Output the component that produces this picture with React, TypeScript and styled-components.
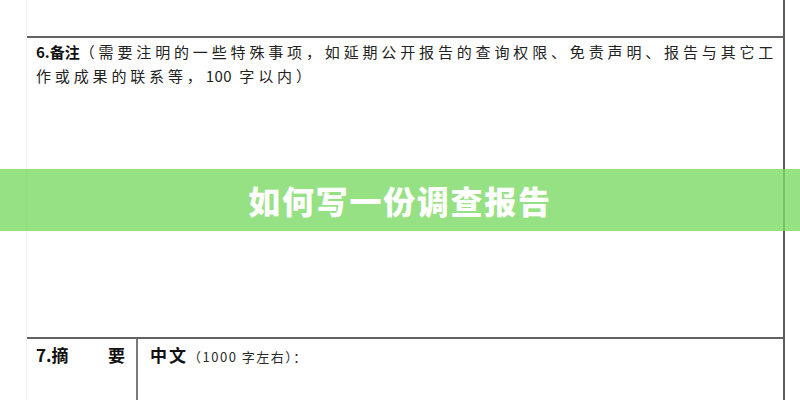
import React from "react";
import styled, { createGlobalStyle } from "styled-components";

const Global = createGlobalStyle`
  html, body { margin: 0; padding: 0; background: #ffffff; }
  body { width: 800px; height: 400px; overflow: hidden; }
  #root { width: 800px; height: 400px; }
`;

const Frame = styled.div`
  position: relative;
  width: 800px;
  height: 400px;
  background: #ffffff;
  overflow: hidden;
  font-family: "Noto Sans CJK SC", "Noto Sans", sans-serif;
  color: #1e1e1e;
`;

const Sheet = styled.div`
  display: flex;
  flex-direction: column;
  margin-left: 26px;
  width: 756px;
  height: 400px;
  border-left: 1px solid #f0f0f0;
  border-right: 2px solid #5c5c5c;
`;

const EmptyCell = styled.div`
  height: 36px;
  border-bottom: 2px solid #626262;
`;

const NoteCell = styled.div`
  height: 297px;
  padding: 2px 0 0 9px;
  font-size: 15px;
  line-height: 23.5px;
  letter-spacing: 3.85px;
  color: #222;
`;

const Strong = styled.span<{ $size?: number; $spacing?: number }>`
  font-weight: 700;
  color: #111;
  font-size: ${(p) => (p.$size ? `${p.$size}px` : "inherit")};
  letter-spacing: ${(p) => (p.$spacing !== undefined ? `${p.$spacing}px` : "inherit")};
`;

const Num = styled.span`
  letter-spacing: 0.5px;
`;

const BottomRow = styled.div`
  flex: 1;
  display: grid;
  grid-template-columns: 109px 1fr;
  border-top: 2px solid #626262;
`;

const LabelCell = styled.div`
  display: flex;
  justify-content: space-between;
  align-items: flex-start;
  padding: 4px 11px 0 9px;
  font-size: 17px;
  line-height: 24px;
  font-weight: 700;
  color: #111;
`;

const ContentCell = styled.div`
  border-left: 2px solid #7a7a7a;
  padding: 4px 0 0 12px;
  line-height: 24px;
  font-size: 13px;
  letter-spacing: 1.5px;
  color: #2a2a2a;
`;

const Banner = styled.div`
  position: absolute;
  left: 0;
  top: 169px;
  width: 800px;
  height: 62px;
  display: flex;
  align-items: center;
  justify-content: center;
  background: rgba(124, 217, 100, 0.8);
`;

const Title = styled.h1`
  margin: 0;
  font-family: "Noto Sans CJK SC", sans-serif;
  font-size: 32px;
  font-weight: 900;
  letter-spacing: 1.7px;
  color: #ffffff;
  line-height: 1;
`;

export default function App() {
  return (
    <Frame>
      <Global />
      <Sheet>
        <EmptyCell />
        <NoteCell>
          <Strong $spacing={0}>6.备注</Strong>（需要注明的一些特殊事项，如延期公开报告的查询权限、免责声明、报告与其它工作或成果的联系等，<Num>100</Num> 字以内）
        </NoteCell>
        <BottomRow>
          <LabelCell>
            <span>7.摘</span>
            <span>要</span>
          </LabelCell>
          <ContentCell>
            <Strong $size={17} $spacing={2}>中文</Strong>（1000 字左右）：
          </ContentCell>
        </BottomRow>
      </Sheet>
      <Banner>
        <Title>如何写一份调查报告</Title>
      </Banner>
    </Frame>
  );
}
